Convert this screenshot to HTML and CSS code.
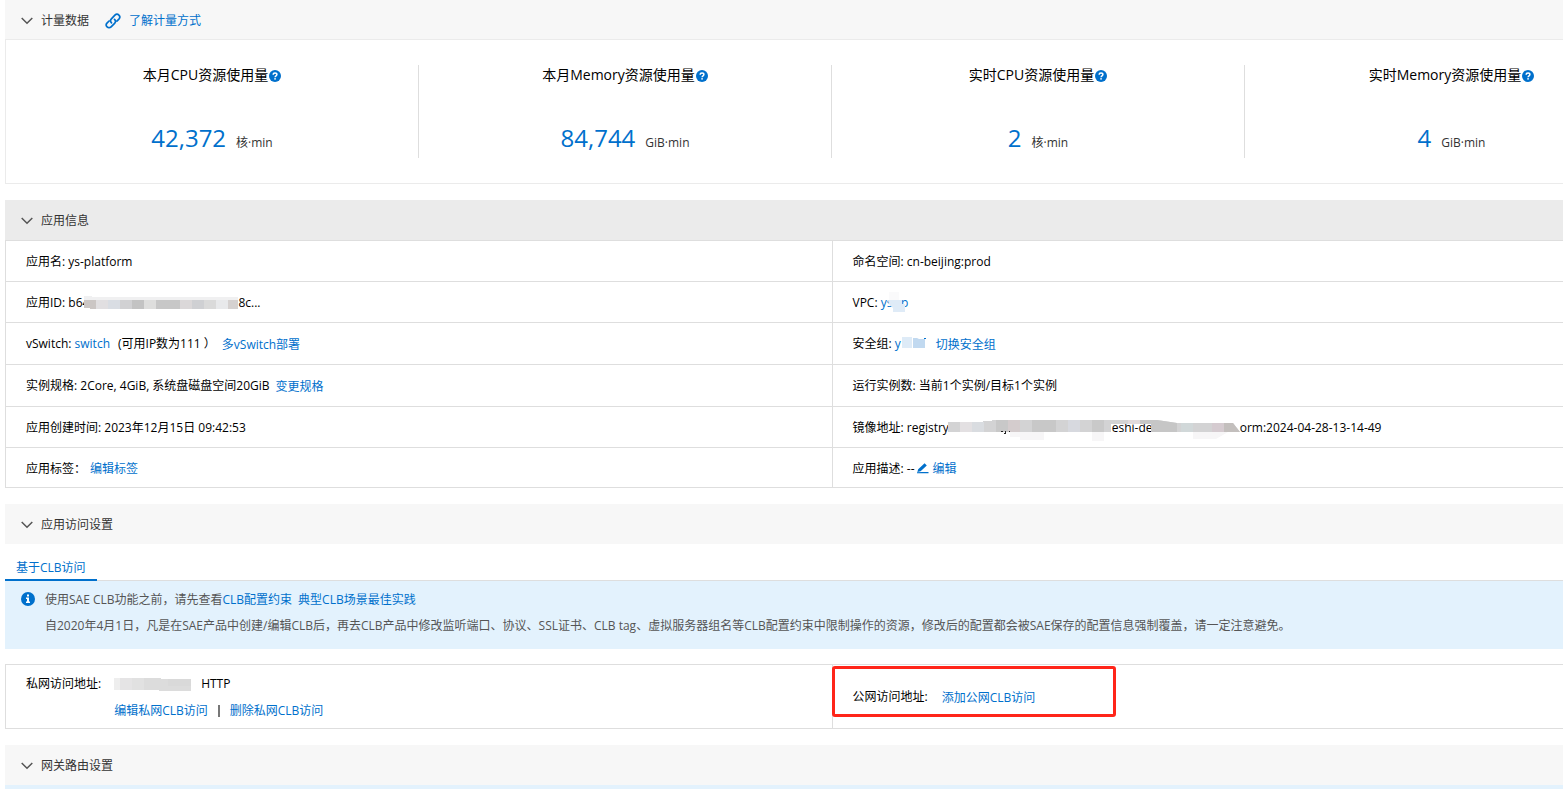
FILE: index.html
```html
<!DOCTYPE html>
<html lang="zh-CN">
<head>
<meta charset="utf-8">
<title>应用基本信息</title>
<link rel="stylesheet" href="styles.css">
</head>
<body>
<svg class="defs" aria-hidden="true">
  <symbol id="chevron" viewBox="0 0 12 8"><path d="M.7 1 6 6.300 11.300 1" fill="none" stroke="#555" stroke-width="1.500"/></symbol>
  <symbol id="help" viewBox="0 0 12 12"><circle cx="6" cy="6" r="6" fill="#0070cc"/><path d="M4.200 4.700C4.200 2.400 7.900 2.500 7.900 4.600 7.900 5.900 6.100 5.800 6.100 7.200" fill="none" stroke="#fff" stroke-width="1.500"/><rect x="5.300" y="8.100" width="1.500" height="1.500" fill="#fff"/></symbol>
</svg>
<main class="page">
  <section class="panel">
    <header class="bar">
      <button class="toggle" type="button"><svg class="chevron"><use href="#chevron"/></svg>计量数据</button>
      <a class="doc-link" href="#"><svg class="chain" viewBox="0 0 16 16"><g fill="none" stroke="#0070cc" stroke-width="1.700" stroke-linecap="round"><path d="M6.500 9.800C5.200 8.500 5.300 6.900 6.400 5.800L9.900 2.200C11.100 1 12.800 1 13.900 2.100 15 3.200 15 4.900 13.900 6.100L11.900 8.100"/><path d="M9.500 6.300C10.800 7.600 10.700 9.200 9.600 10.300L6.100 13.800C4.900 15 3.200 15 2.100 13.900 1 12.800 1 11.100 2.200 9.900L4.100 8"/></g></svg>了解计量方式</a>
    </header>
    <div class="metrics">
      <div class="metric"><div class="metric-title">本月CPU资源使用量<svg class="help"><use href="#help"/></svg></div><div class="metric-value"><strong>42,372</strong><span>核·min</span></div></div>
      <div class="metric"><div class="metric-title">本月Memory资源使用量<svg class="help"><use href="#help"/></svg></div><div class="metric-value"><strong>84,744</strong><span>GiB·min</span></div></div>
      <div class="metric"><div class="metric-title">实时CPU资源使用量<svg class="help"><use href="#help"/></svg></div><div class="metric-value"><strong>2</strong><span>核·min</span></div></div>
      <div class="metric"><div class="metric-title">实时Memory资源使用量<svg class="help"><use href="#help"/></svg></div><div class="metric-value"><strong>4</strong><span>GiB·min</span></div></div>
    </div>
  </section>

  <section class="panel">
    <header class="bar bar-dark">
      <button class="toggle" type="button"><svg class="chevron"><use href="#chevron"/></svg>应用信息</button>
    </header>
    <table class="info">
      <tr>
        <td>应用名: ys-platform</td>
        <td>命名空间: cn-beijing:prod</td>
      </tr>
      <tr>
        <td><div class="line">应用ID:&nbsp;<span>b64</span><svg class="mask mask-id" viewBox="0 0 154 14"><path fill="#f0f0f1" d="M0 0h8v1h146v12H6v-1H0z"/><g><path fill="#cbc6c4" d="M0 4h12v9H6v-1H0z"/><path fill="#e1dfe1" d="M12 4h12v9H12z"/><path fill="#d9dde3" d="M24 4h12v9H24z"/><path fill="#d1d1d3" d="M36 4h12v9H36z"/><path fill="#c3c3c3" d="M48 4h12v9H48z"/><path fill="#dededd" d="M60 4h12v9H60z"/><path fill="#c7c7c7" d="M72 4h24v9H72z"/><path fill="#dbd8d9" d="M96 4h12v9H96z"/><path fill="#cfd0d3" d="M108 4h12v9h-12z"/><path fill="#dadada" d="M120 4h12v9h-12z"/><path fill="#e8e9eb" d="M132 4h12v9h-12z"/><path fill="#d5d1d0" d="M144 4h10v9h-10z"/></g></svg><span>8c...</span></div></td>
        <td><div class="line">VPC:&nbsp;<a class="covered" href="#">yslzp<svg class="mask mask-vpc" viewBox="0 0 20 20"><path fill="#fafafb" d="M2 0h10v8H2z"/><path fill="#dfebf7" d="M1 8h14v4h3v8H6v-4l-4-4z"/></svg></a></div></td>
      </tr>
      <tr class="tall">
        <td><div class="line">vSwitch:&nbsp;<a href="#">switch</a><span class="note">(可用IP数为111 ）</span><a class="action action-near" href="#">多vSwitch部署</a></div></td>
        <td><div class="line">安全组:&nbsp;<a class="covered group" href="#">y<svg class="mask mask-group" viewBox="0 0 26 12"><path fill="#deebf7" d="M1 0h10v11H1z"/><path fill="#c1d9f0" d="M12 1h4l2 1h6v9H12z"/><path fill="#0070cc" d="M23 1h2v1h-2z"/></svg></a><a class="action" href="#">切换安全组</a></div></td>
      </tr>
      <tr class="tall">
        <td><div class="line">实例规格: 2Core, 4GiB, 系统盘磁盘空间20GiB<a class="action action-near" href="#">变更规格</a></div></td>
        <td>运行实例数: 当前1个实例/目标1个实例</td>
      </tr>
      <tr>
        <td>应用创建时间: 2023年12月15日 09:42:53</td>
        <td><div class="line">镜像地址:&nbsp;registry-<span class="image-path"><span>eshi-de</span><svg class="mask" viewBox="0 0 292 22"><path fill="#d3d3d4" d="M0 3h35V2h9V1h165l20 3h56l7 9H203V5h-40v8H0z"/><path fill="#e3e0e2" d="M12 3h12v10H12z"/><path fill="#d9dce0" d="M24 3h12v10H24z"/><path fill="#c8c8c8" d="M48 1h12v12H48z"/><path fill="#d4cccd" d="M60 1h12v12H60z"/><path fill="#c8c8c8" d="M84 1h24v12H84z"/><path fill="#d7d9df" d="M120 1h12v12h-12z"/><path fill="#c9c9c9" d="M144 1h12v12h-12z"/><path fill="#e1dadb" d="M180 1h12v4h-12z"/><path fill="#c6c6c6" d="M192 1h17l20 3v9h-26V5h-11z"/><path fill="#d1d8d9" d="M233 4h12v9h-12z"/><path fill="#d5cbd0" d="M264 4h12v9h-12z"/><path fill="#c3bfbd" d="M276 4h9l7 9h-16z"/><path fill="#f7f6f7" d="M62 13h34v8H72v-3H62zM144 13h12v9h-12zM245 13h35l-12 7h-23z"/><path fill="#222" d="M53 12h2v1h-2zM57 12h1v3h-2v-1h1zM61 12h1v1h-1z"/></svg></span>orm:2024-04-28-13-14-49</div></td>
      </tr>
      <tr class="short">
        <td><div class="line">应用标签：<a class="tag-edit" href="#">编辑标签</a></div></td>
        <td><div class="line">应用描述: --<a class="edit" href="#"><svg class="pencil" viewBox="0 0 12 11"><path fill="#0070cc" d="M.5 8.500 1.200 6.200 7.600.3 9.800 2.500 3.600 8.300.5 9zM5 9h6.500v1.300H0V9.300z"/></svg>编辑</a></div></td>
      </tr>
    </table>
  </section>

  <section class="panel">
    <header class="bar">
      <button class="toggle" type="button"><svg class="chevron"><use href="#chevron"/></svg>应用访问设置</button>
    </header>
    <nav class="tabs"><button class="tab" type="button">基于CLB访问</button></nav>
    <div class="notice">
      <svg class="notice-icon" viewBox="0 0 14 14"><circle cx="7" cy="7" r="7" fill="#0070cc"/><path fill="#fff" d="M6 2.500h2v2H6zM5 5.500h3v4h1V11H5V9.500h1V7H5z"/></svg>
      <div class="notice-text">
        <p>使用SAE CLB功能之前，请先查看<a href="#">CLB配置约束</a><a class="practice" href="#">典型CLB场景最佳实践</a></p>
        <p>自2020年4月1日，凡是在SAE产品中创建/编辑CLB后，再去CLB产品中修改监听端口、协议、SSL证书、CLB tag、虚拟服务器组名等CLB配置约束中限制操作的资源，修改后的配置都会被SAE保存的配置信息强制覆盖，请一定注意避免。</p>
      </div>
    </div>
    <table class="info access">
      <tr>
        <td>
          <div class="private">
            <span>私网访问地址:</span>
            <div>
              <div class="line"><svg class="mask mask-ip" viewBox="0 0 77 13"><path fill="#eee" d="M0 0h6v12H0z"/><path fill="#e5e4e5" d="M6 0h12v12H6z"/><path fill="#e1e1e1" d="M18 0h12v12H18z"/><path fill="#dcdcdc" d="M30 0h17v1h30v12H45v-1H30z"/><path fill="#d9d9d9" d="M54 1h23v7H54z"/></svg>HTTP</div>
              <div class="line links"><a href="#">编辑私网CLB访问</a><i class="divider"></i><a href="#">删除私网CLB访问</a></div>
            </div>
          </div>
        </td>
        <td><div class="line">公网访问地址:<a class="action action-far" href="#">添加公网CLB访问</a></div><div class="highlight"></div></td>
      </tr>
    </table>
  </section>

  <section class="panel">
    <header class="bar">
      <button class="toggle" type="button"><svg class="chevron"><use href="#chevron"/></svg>网关路由设置</button>
    </header>
    <div class="notice"></div>
  </section>
</main>
</body>
</html>
```
FILE: styles.css
```css
* { box-sizing: border-box; }

html { height: 100%; overflow: hidden; }

body {
  height: 100%;
  margin: 0;
  overflow: hidden;
  background: #fff;
  color: #000;
  font: 12px/18px "Open Sans", "Noto Sans CJK SC", sans-serif;
}

a { color: #0070cc; text-decoration: none; }
p { margin: 0; }
svg { flex: none; }
button { font: inherit; border: 0; background: none; padding: 0; cursor: pointer; }
.defs { position: absolute; width: 0; height: 0; }

/* The content is wider than the viewport and is cut at its right edge. */
.page { margin: 0 -96px 0 5px; white-space: nowrap; }
.panel { margin-bottom: 16px; }

.bar {
  display: flex;
  align-items: center;
  height: 40px;
  padding: 2px 0 0 16px;
  background: #f7f7f7;
}
.bar-dark { background: #ebebeb; }
.panel:first-child .bar { height: 39px; }
.toggle { display: flex; align-items: center; gap: 8px; color: #333; }
.chevron { width: 12px; height: 8px; }
.doc-link { display: flex; align-items: center; gap: 8px; margin-left: 16px; }
.chain { width: 16px; height: 16px; }

.metrics {
  display: grid;
  grid-template-columns: repeat(4, 1fr);
  padding: 25px 0;
  border: 1px solid #ebebeb;
}
.metric { height: 93px; text-align: center; border-right: 1px solid #dedede; }
.metric:last-child { border-right: 0; }
.metric-title {
  display: flex;
  justify-content: center;
  align-items: center;
  gap: 1px;
  font-size: 14px;
  line-height: 20px;
}
.help { width: 12px; height: 12px; margin-top: 2px; }
.metric-value {
  display: flex;
  justify-content: center;
  align-items: baseline;
  gap: 10px;
  margin-top: 35px;
  line-height: 36px;
  color: #333;
}
.metric-value strong { color: #0070cc; font-size: 24px; font-weight: 400; }

.info { width: 100%; table-layout: fixed; border-collapse: collapse; }
.info td {
  position: relative;
  height: 41px;
  padding: 2px 0 0 20px;
  border: 1px solid #dedede;
}
.info .tall td { height: 42px; padding-top: 0; }
.info .short td { height: 40px; }
.line { display: flex; align-items: center; height: 18px; }
.note { margin-left: 8px; }
.action { margin-left: 10px; padding-top: 2px; }
.action-near { margin-left: 6px; }
.action-far { margin-left: 14px; }
.tag-edit { margin-left: 4px; }
.edit { display: flex; align-items: center; gap: 4px; margin-left: 2px; }
.pencil { width: 12px; height: 11px; }

.mask { display: block; }
.mask-id { width: 154px; height: 14px; margin-left: -5px; }
.covered { position: relative; }
.group { width: 31px; }
.mask-vpc { position: absolute; left: 6px; top: -2px; width: 20px; height: 20px; }
.mask-group { position: absolute; left: 6px; top: 2px; width: 26px; height: 12px; }
.image-path { position: relative; width: 292px; margin-left: -5px; padding-left: 164px; }
.image-path .mask { position: absolute; left: 0; top: 0; width: 292px; height: 22px; }

.tabs { display: flex; height: 37px; border-bottom: 1px solid #dedede; }
.tab {
  height: 37px;
  padding: 12px 11px 0;
  border-bottom: 2px solid #0070cc;
  color: #0070cc;
}

.notice {
  display: flex;
  gap: 10px;
  min-height: 68px;
  padding: 6px 16px;
  background: #e3f2fd;
  color: #555;
}
.notice-icon { width: 14px; height: 14px; margin-top: 5px; }
.notice-text { line-height: 26px; }
.practice { margin-left: 6px; }

.access { margin-top: 15px; }
.access td { height: 64px; }
.access td:last-child { padding-top: 0; }
.private { display: flex; gap: 13px; }
.mask-ip { width: 77px; height: 13px; margin-right: 10px; }
.links { margin-top: 9px; }
.divider { width: 2px; height: 12px; margin: 0 10px; background: #777; }
.highlight {
  position: absolute;
  top: 1px;
  left: -1px;
  width: 284px;
  height: 51px;
  border: 3px solid #ff2519;
  border-radius: 3px;
}
```
